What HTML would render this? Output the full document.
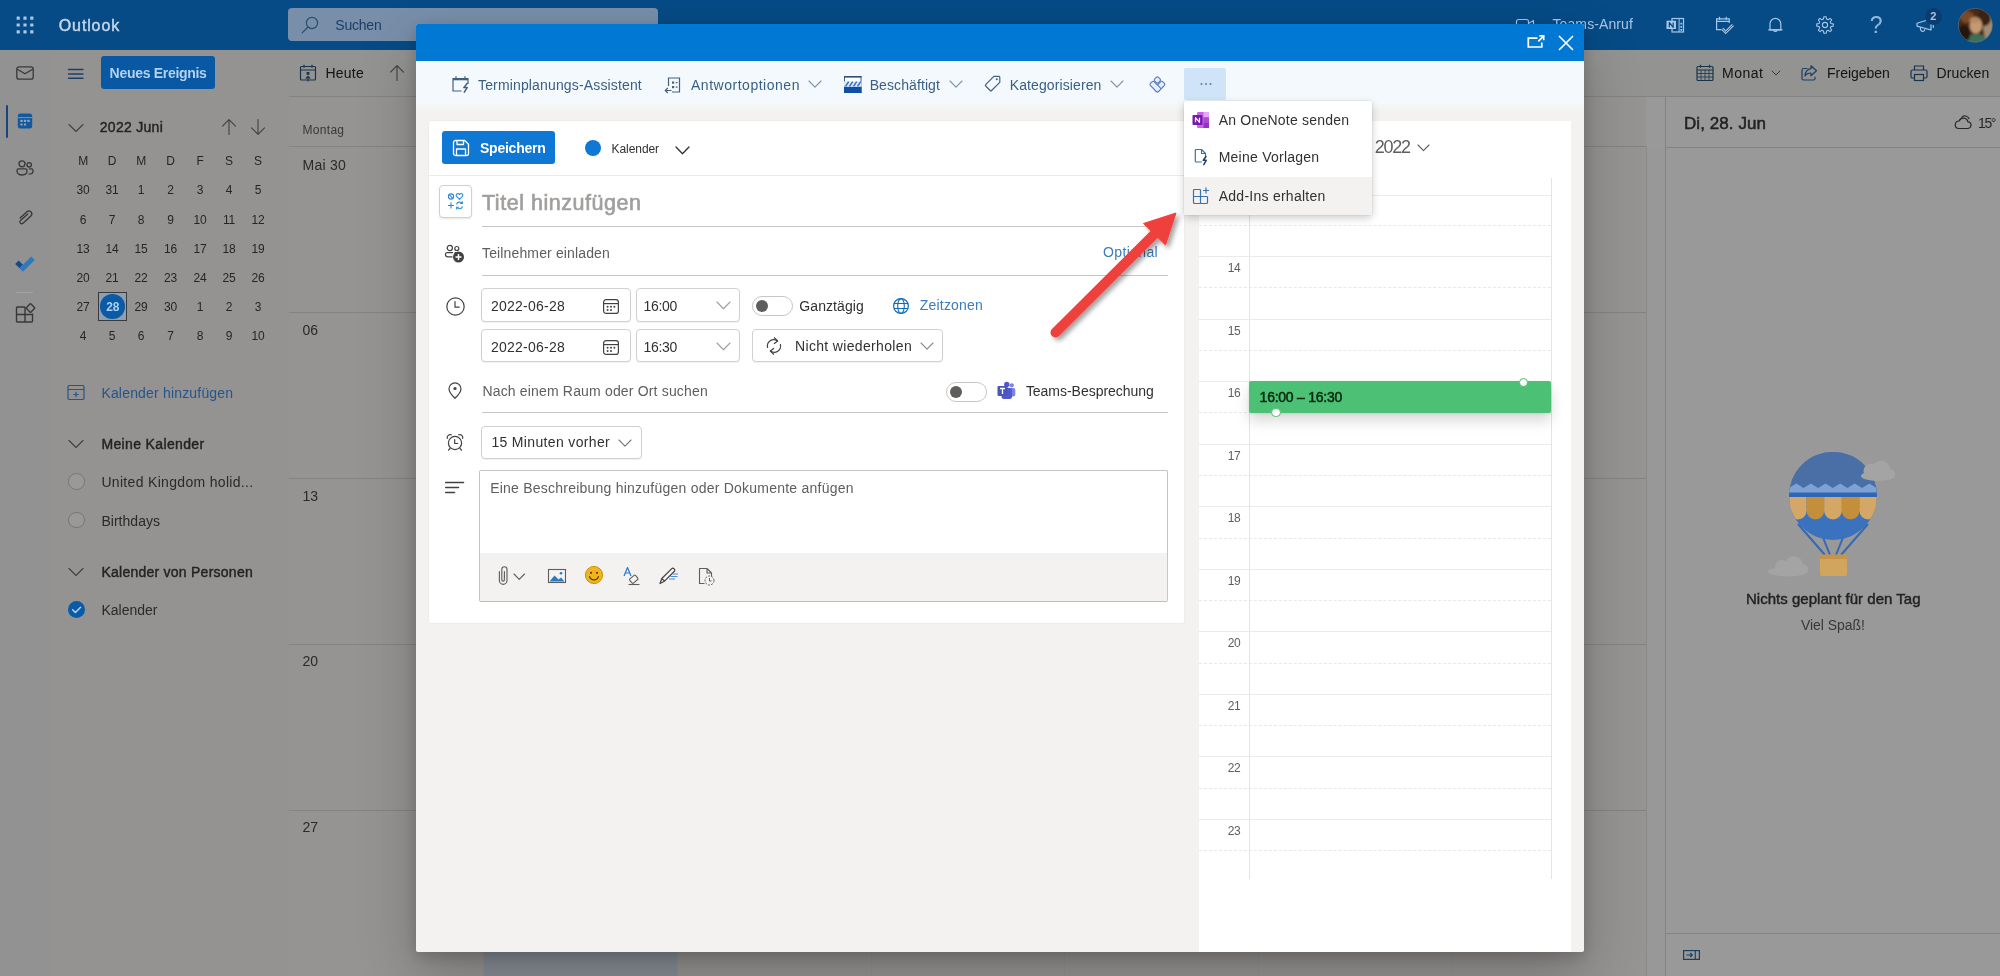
<!DOCTYPE html>
<html lang="de"><head><meta charset="utf-8"><title>Outlook Kalender</title>
<style>
html,body{margin:0;padding:0;}
body{width:2000px;height:976px;overflow:hidden;position:relative;background:#fff;font-family:"Liberation Sans",sans-serif;}
.t{position:absolute;white-space:nowrap;}
#app,#ov,#modal{position:absolute;left:0;top:0;width:2000px;height:976px;overflow:hidden;will-change:transform;}
#modal{overflow:visible;}
svg{overflow:visible;}
</style></head><body>
<div id="app">
<div style="position:absolute;left:0px;top:0px;width:2000px;height:50px;background:#0a7ddf;"></div>
<div style="position:absolute;left:0px;top:50px;width:50px;height:926px;background:#f5f4f4;"></div>
<div style="position:absolute;left:50px;top:50px;width:239px;height:926px;background:#f8f5f4;"></div>
<svg style="position:absolute;left:15px;top:63px;" width="20" height="20" viewBox="0 0 20 20" fill="none"><rect x="1.8" y="3.8" width="16.4" height="12.4" rx="2.2" stroke="#5c5c5c" stroke-width="1.3"/><path d="M2.3 6.3 L10 10.8 L17.7 6.3" stroke="#5c5c5c" stroke-width="1.3" stroke-linejoin="round"/></svg>
<svg style="position:absolute;left:15px;top:158px;" width="20" height="20" viewBox="0 0 20 20" fill="none"><circle cx="7" cy="5.8" r="3" stroke="#5c5c5c" stroke-width="1.3"/><circle cx="14.2" cy="6.8" r="2.2" stroke="#5c5c5c" stroke-width="1.3"/><path d="M2 12.5a1.6 1.6 0 0 1 1.6-1.6h6.8a1.6 1.6 0 0 1 1.6 1.6v0.6c0 2.4-2 3.9-5 3.9s-5-1.5-5-3.9z" stroke="#5c5c5c" stroke-width="1.3"/><path d="M13.5 16.2c2.6 0 4.5-1.2 4.5-3.2v-0.6a1.5 1.5 0 0 0-1.5-1.5h-2.6" stroke="#5c5c5c" stroke-width="1.3"/></svg>
<svg style="position:absolute;left:15px;top:207px;" width="20" height="20" viewBox="0 0 20 20" fill="none"><path d="M5.2 11.2 L11.7 4.7a2.9 2.9 0 0 1 4.1 4.1L8.3 16.3a1.8 1.8 0 0 1-2.6-2.6l6.9-6.9" stroke="#5c5c5c" stroke-width="1.3" stroke-linecap="round" stroke-linejoin="round" transform="rotate(3 10 10)"/></svg>
<svg style="position:absolute;left:15px;top:303px;" width="22" height="22" viewBox="0 0 22 22" fill="none"><path d="M10 4h-7.500a1 1 0 0 0-1 1v13a1 1 0 0 0 1 1h14a1 1 0 0 0 1-1v-7.500 M10 4v15 M1.500 11.500h16" stroke="#5c5c5c" stroke-width="1.400"/><rect x="12.300" y="1.800" width="6.400" height="6.400" rx=".8" transform="rotate(45 15.500 5)" stroke="#5c5c5c" stroke-width="1.400" fill="#f5f4f4"/></svg>
<svg style="position:absolute;left:66px;top:118px;" width="20" height="20" viewBox="0 0 20 20" fill="none"><path d="M3 6.5 L10 13.5 L17 6.5" stroke="#6e6c6a" stroke-width="1.1" stroke-linecap="round" stroke-linejoin="round"/></svg>
<span class="t" style="left:99.8px;top:119.3px;font-size:14px;line-height:17px;color:#3b3a39;-webkit-text-stroke:0.42px #3b3a39;letter-spacing:0.28px;">2022 Juni</span>
<svg style="position:absolute;left:219px;top:117px;" width="20" height="20" viewBox="0 0 20 20" fill="none"><path d="M10 17.5V2.8 M3.5 9.2 L10 2.7 L16.5 9.2" stroke="#6e6c6a" stroke-width="1.1" stroke-linecap="round" stroke-linejoin="round"/></svg>
<svg style="position:absolute;left:248px;top:117px;" width="20" height="20" viewBox="0 0 20 20" fill="none"><path d="M10 2.5V17.2 M3.5 10.8 L10 17.3 L16.5 10.8" stroke="#6e6c6a" stroke-width="1.1" stroke-linecap="round" stroke-linejoin="round"/></svg>
<span class="t" style="left:78.2px;top:154.1px;font-size:12px;line-height:14px;color:#3f3e3d;letter-spacing:-0.30px;">M</span>
<span class="t" style="left:107.8px;top:154.1px;font-size:12px;line-height:14px;color:#3f3e3d;letter-spacing:-0.26px;">D</span>
<span class="t" style="left:136.2px;top:154.1px;font-size:12px;line-height:14px;color:#3f3e3d;letter-spacing:-0.30px;">M</span>
<span class="t" style="left:166.3px;top:154.1px;font-size:12px;line-height:14px;color:#3f3e3d;letter-spacing:-0.26px;">D</span>
<span class="t" style="left:196.4px;top:154.1px;font-size:12px;line-height:14px;color:#3f3e3d;letter-spacing:-0.22px;">F</span>
<span class="t" style="left:225.1px;top:154.1px;font-size:12px;line-height:14px;color:#3f3e3d;letter-spacing:-0.24px;">S</span>
<span class="t" style="left:254.1px;top:154.1px;font-size:12px;line-height:14px;color:#3f3e3d;letter-spacing:-0.24px;">S</span>
<span class="t" style="left:76.5px;top:183.3px;font-size:12px;line-height:14px;color:#3f3e3d;letter-spacing:-0.20px;">30</span>
<span class="t" style="left:105.5px;top:183.3px;font-size:12px;line-height:14px;color:#3f3e3d;letter-spacing:-0.20px;">31</span>
<span class="t" style="left:137.8px;top:183.3px;font-size:12px;line-height:14px;color:#3f3e3d;letter-spacing:-0.20px;">1</span>
<span class="t" style="left:167.3px;top:183.3px;font-size:12px;line-height:14px;color:#3f3e3d;letter-spacing:-0.20px;">2</span>
<span class="t" style="left:196.8px;top:183.3px;font-size:12px;line-height:14px;color:#3f3e3d;letter-spacing:-0.20px;">3</span>
<span class="t" style="left:225.8px;top:183.3px;font-size:12px;line-height:14px;color:#3f3e3d;letter-spacing:-0.20px;">4</span>
<span class="t" style="left:254.8px;top:183.3px;font-size:12px;line-height:14px;color:#3f3e3d;letter-spacing:-0.20px;">5</span>
<span class="t" style="left:79.8px;top:212.5px;font-size:12px;line-height:14px;color:#3f3e3d;letter-spacing:-0.20px;">6</span>
<span class="t" style="left:108.8px;top:212.5px;font-size:12px;line-height:14px;color:#3f3e3d;letter-spacing:-0.20px;">7</span>
<span class="t" style="left:137.8px;top:212.5px;font-size:12px;line-height:14px;color:#3f3e3d;letter-spacing:-0.20px;">8</span>
<span class="t" style="left:167.3px;top:212.5px;font-size:12px;line-height:14px;color:#3f3e3d;letter-spacing:-0.20px;">9</span>
<span class="t" style="left:193.5px;top:212.5px;font-size:12px;line-height:14px;color:#3f3e3d;letter-spacing:-0.20px;">10</span>
<span class="t" style="left:223.0px;top:212.5px;font-size:12px;line-height:14px;color:#3f3e3d;letter-spacing:-0.19px;">11</span>
<span class="t" style="left:251.5px;top:212.5px;font-size:12px;line-height:14px;color:#3f3e3d;letter-spacing:-0.20px;">12</span>
<span class="t" style="left:76.5px;top:241.6px;font-size:12px;line-height:14px;color:#3f3e3d;letter-spacing:-0.20px;">13</span>
<span class="t" style="left:105.5px;top:241.6px;font-size:12px;line-height:14px;color:#3f3e3d;letter-spacing:-0.20px;">14</span>
<span class="t" style="left:134.5px;top:241.6px;font-size:12px;line-height:14px;color:#3f3e3d;letter-spacing:-0.20px;">15</span>
<span class="t" style="left:164.0px;top:241.6px;font-size:12px;line-height:14px;color:#3f3e3d;letter-spacing:-0.20px;">16</span>
<span class="t" style="left:193.5px;top:241.6px;font-size:12px;line-height:14px;color:#3f3e3d;letter-spacing:-0.20px;">17</span>
<span class="t" style="left:222.5px;top:241.6px;font-size:12px;line-height:14px;color:#3f3e3d;letter-spacing:-0.20px;">18</span>
<span class="t" style="left:251.5px;top:241.6px;font-size:12px;line-height:14px;color:#3f3e3d;letter-spacing:-0.20px;">19</span>
<span class="t" style="left:76.5px;top:270.8px;font-size:12px;line-height:14px;color:#3f3e3d;letter-spacing:-0.20px;">20</span>
<span class="t" style="left:105.5px;top:270.8px;font-size:12px;line-height:14px;color:#3f3e3d;letter-spacing:-0.20px;">21</span>
<span class="t" style="left:134.5px;top:270.8px;font-size:12px;line-height:14px;color:#3f3e3d;letter-spacing:-0.20px;">22</span>
<span class="t" style="left:164.0px;top:270.8px;font-size:12px;line-height:14px;color:#3f3e3d;letter-spacing:-0.20px;">23</span>
<span class="t" style="left:193.5px;top:270.8px;font-size:12px;line-height:14px;color:#3f3e3d;letter-spacing:-0.20px;">24</span>
<span class="t" style="left:222.5px;top:270.8px;font-size:12px;line-height:14px;color:#3f3e3d;letter-spacing:-0.20px;">25</span>
<span class="t" style="left:251.5px;top:270.8px;font-size:12px;line-height:14px;color:#3f3e3d;letter-spacing:-0.20px;">26</span>
<span class="t" style="left:76.5px;top:299.9px;font-size:12px;line-height:14px;color:#3f3e3d;letter-spacing:-0.20px;">27</span>
<span class="t" style="left:134.5px;top:299.9px;font-size:12px;line-height:14px;color:#3f3e3d;letter-spacing:-0.20px;">29</span>
<span class="t" style="left:164.0px;top:299.9px;font-size:12px;line-height:14px;color:#3f3e3d;letter-spacing:-0.20px;">30</span>
<span class="t" style="left:196.8px;top:299.9px;font-size:12px;line-height:14px;color:#3f3e3d;letter-spacing:-0.20px;">1</span>
<span class="t" style="left:225.8px;top:299.9px;font-size:12px;line-height:14px;color:#3f3e3d;letter-spacing:-0.20px;">2</span>
<span class="t" style="left:254.8px;top:299.9px;font-size:12px;line-height:14px;color:#3f3e3d;letter-spacing:-0.20px;">3</span>
<span class="t" style="left:79.8px;top:329.1px;font-size:12px;line-height:14px;color:#3f3e3d;letter-spacing:-0.20px;">4</span>
<span class="t" style="left:108.8px;top:329.1px;font-size:12px;line-height:14px;color:#3f3e3d;letter-spacing:-0.20px;">5</span>
<span class="t" style="left:137.8px;top:329.1px;font-size:12px;line-height:14px;color:#3f3e3d;letter-spacing:-0.20px;">6</span>
<span class="t" style="left:167.3px;top:329.1px;font-size:12px;line-height:14px;color:#3f3e3d;letter-spacing:-0.20px;">7</span>
<span class="t" style="left:196.8px;top:329.1px;font-size:12px;line-height:14px;color:#3f3e3d;letter-spacing:-0.20px;">8</span>
<span class="t" style="left:225.8px;top:329.1px;font-size:12px;line-height:14px;color:#3f3e3d;letter-spacing:-0.20px;">9</span>
<span class="t" style="left:251.5px;top:329.1px;font-size:12px;line-height:14px;color:#3f3e3d;letter-spacing:-0.20px;">10</span>
<svg style="position:absolute;left:66px;top:434px;" width="20" height="20" viewBox="0 0 20 20" fill="none"><path d="M3 6.5 L10 13.5 L17 6.5" stroke="#6e6c6a" stroke-width="1.1" stroke-linecap="round" stroke-linejoin="round"/></svg>
<span class="t" style="left:101.4px;top:435.5px;font-size:14px;line-height:17px;color:#3b3a39;-webkit-text-stroke:0.42px #3b3a39;letter-spacing:0.36px;">Meine Kalender</span>
<div style="position:absolute;left:68px;top:473px;width:14.5px;height:14.5px;border:1px solid #c8c6c4;border-radius:50%;background:#fff;"></div>
<span class="t" style="left:101.4px;top:474.2px;font-size:14px;line-height:17px;color:#484644;letter-spacing:0.32px;">United Kingdom holid...</span>
<div style="position:absolute;left:68px;top:511.5px;width:14.5px;height:14.5px;border:1px solid #c8c6c4;border-radius:50%;background:#fff;"></div>
<span class="t" style="left:101.4px;top:512.5px;font-size:14px;line-height:17px;color:#484644;letter-spacing:0.03px;">Birthdays</span>
<svg style="position:absolute;left:66px;top:562px;" width="20" height="20" viewBox="0 0 20 20" fill="none"><path d="M3 6.5 L10 13.5 L17 6.5" stroke="#6e6c6a" stroke-width="1.1" stroke-linecap="round" stroke-linejoin="round"/></svg>
<span class="t" style="left:101.4px;top:563.9px;font-size:14px;line-height:17px;color:#3b3a39;-webkit-text-stroke:0.42px #3b3a39;letter-spacing:0.25px;">Kalender von Personen</span>
<span class="t" style="left:101.4px;top:602.1px;font-size:14px;line-height:17px;color:#484644;letter-spacing:0.01px;">Kalender</span>
<div style="position:absolute;left:289px;top:50px;width:1711px;height:46px;background:#f6f5f4;"></div>
<div style="position:absolute;left:289px;top:96px;width:1711px;height:880px;background:#fff;"></div>
<div style="position:absolute;left:289px;top:97px;width:1357px;height:879px;background:#faf7f6;"></div>
<div style="position:absolute;left:289px;top:96px;width:1711px;height:1px;background:#dddbd9;"></div>
<svg style="position:absolute;left:298px;top:63px;" width="20" height="20" viewBox="0 0 20 20" fill="none"><rect x="2.5" y="3.5" width="15" height="13.5" rx="1" stroke="#2b5580" stroke-width="1.2"/><path d="M2.5 7h15 M6 1.8v3 M14 1.8v3" stroke="#2b5580" stroke-width="1.2"/><rect x="8.6" y="9" width="2.8" height="2.8" fill="#2b5580"/><path d="M10 18.5v-5 M7.8 15.6 L10 13.3 L12.2 15.6" stroke="#2b5580" stroke-width="1.1"/></svg>
<span class="t" style="left:325.5px;top:64.7px;font-size:14px;line-height:17px;color:#242424;letter-spacing:0.23px;">Heute</span>
<svg style="position:absolute;left:387px;top:63px;" width="20" height="20" viewBox="0 0 20 20" fill="none"><path d="M10 17.5V2.8 M3.5 9.2 L10 2.7 L16.5 9.2" stroke="#6e6c6a" stroke-width="1.1" stroke-linecap="round" stroke-linejoin="round"/></svg>
<svg style="position:absolute;left:1695px;top:63px;" width="20" height="20" viewBox="0 0 20 20" fill="none"><rect x="2" y="3.5" width="16" height="14" rx="1" stroke="#2b5580" stroke-width="1.2"/><path d="M2 7h16 M5.5 1.8v3 M14.5 1.8v3" stroke="#2b5580" stroke-width="1.2"/><path d="M2 10.5h16 M2 14h16 M6 7v10.5 M10 7v10.5 M14 7v10.5" stroke="#2b5580" stroke-width=".8"/></svg>
<span class="t" style="left:1722.0px;top:65.1px;font-size:14px;line-height:17px;color:#242424;letter-spacing:0.48px;">Monat</span>
<svg style="position:absolute;left:1770px;top:67px;" width="12" height="12" viewBox="0 0 12 12" fill="none"><path d="M2 4 L6 8 L10 4" stroke="#605e5c" stroke-width="1" stroke-linecap="round" stroke-linejoin="round"/></svg>
<svg style="position:absolute;left:1799px;top:63px;" width="20" height="20" viewBox="0 0 20 20" fill="none"><path d="M8 5.5H4.5a1.5 1.5 0 0 0-1.5 1.500V15.500a1.500 1.500 0 0 0 1.500 1.500h10a1.500 1.500 0 0 0 1.500-1.500V14" stroke="#2b6aa8" stroke-width="1.2" stroke-linecap="round"/><path d="M12 2.800 L17.500 7.800 L12 12.800 V10c-3 0-4.800 1-6 3 0.300-4 2.500-6.800 6-7.300z" stroke="#2b6aa8" stroke-width="1.200" stroke-linejoin="round"/></svg>
<span class="t" style="left:1827.0px;top:65.1px;font-size:14px;line-height:17px;color:#242424;letter-spacing:-0.03px;">Freigeben</span>
<svg style="position:absolute;left:1909px;top:63px;" width="20" height="20" viewBox="0 0 20 20" fill="none"><path d="M5.500 7V3h9v4" stroke="#2b5580" stroke-width="1.200"/><rect x="2" y="7" width="16" height="8" rx="1.500" stroke="#2b5580" stroke-width="1.200"/><rect x="5.500" y="11.500" width="9" height="6" fill="#f6f5f4" stroke="#2b5580" stroke-width="1.200"/></svg>
<span class="t" style="left:1936.5px;top:65.1px;font-size:14px;line-height:17px;color:#242424;letter-spacing:0.11px;">Drucken</span>
<div style="position:absolute;left:289px;top:146px;width:1357px;height:1px;background:#dddbd9;"></div>
<div style="position:absolute;left:289px;top:312px;width:1357px;height:1px;background:#dddbd9;"></div>
<div style="position:absolute;left:289px;top:478px;width:1357px;height:1px;background:#dddbd9;"></div>
<div style="position:absolute;left:289px;top:644px;width:1357px;height:1px;background:#dddbd9;"></div>
<div style="position:absolute;left:289px;top:810px;width:1357px;height:1px;background:#dddbd9;"></div>
<div style="position:absolute;left:1646px;top:146px;width:1px;height:830px;background:#e8e6e4;"></div>
<div style="position:absolute;left:483px;top:146px;width:1px;height:830px;background:#f4f1f0;"></div>
<div style="position:absolute;left:677px;top:146px;width:1px;height:830px;background:#f4f1f0;"></div>
<div style="position:absolute;left:871px;top:146px;width:1px;height:830px;background:#f4f1f0;"></div>
<div style="position:absolute;left:1064px;top:146px;width:1px;height:830px;background:#f4f1f0;"></div>
<div style="position:absolute;left:1258px;top:146px;width:1px;height:830px;background:#f4f1f0;"></div>
<div style="position:absolute;left:1452px;top:146px;width:1px;height:830px;background:#f4f1f0;"></div>
<div style="position:absolute;left:484px;top:811px;width:193px;height:165px;background:#e3ecfb;"></div>
<span class="t" style="left:302.5px;top:123.1px;font-size:12px;line-height:14px;color:#605e5c;letter-spacing:0.30px;">Montag</span>
<span class="t" style="left:302.6px;top:157.1px;font-size:14px;line-height:17px;color:#484644;letter-spacing:0.23px;">Mai 30</span>
<span class="t" style="left:302.6px;top:321.7px;font-size:14px;line-height:17px;color:#484644;letter-spacing:-0.19px;">06</span>
<span class="t" style="left:302.6px;top:488.0px;font-size:14px;line-height:17px;color:#484644;letter-spacing:-0.19px;">13</span>
<span class="t" style="left:302.6px;top:652.7px;font-size:14px;line-height:17px;color:#484644;letter-spacing:-0.19px;">20</span>
<span class="t" style="left:302.6px;top:818.7px;font-size:14px;line-height:17px;color:#484644;letter-spacing:-0.19px;">27</span>
<div style="position:absolute;left:1647px;top:147px;width:18px;height:829px;background:#fdfdfd;"></div>
<div style="position:absolute;left:1665px;top:97px;width:1px;height:879px;background:#dddbd9;"></div>
<div style="position:absolute;left:1666px;top:147px;width:334px;height:1px;background:#dddbd9;"></div>
<span class="t" style="left:1684.0px;top:114.0px;font-size:17px;line-height:20px;color:#3b3a39;-webkit-text-stroke:0.51px #3b3a39;letter-spacing:0.07px;">Di, 28. Jun</span>
<svg style="position:absolute;left:1953px;top:113px;" width="20" height="20" viewBox="0 0 20 20" fill="none"><path d="M5.200 15.500h9.300a3.300 3.300 0 0 0 .4-6.600 4.600 4.600 0 0 0-8.800-.9A3.800 3.800 0 0 0 5.200 15.500z" stroke="#424242" stroke-width="1.200" stroke-linejoin="round"/><path d="M8.5 4.600a4.500 4.500 0 0 1 7.800 1.500" stroke="#424242" stroke-width="1.100"/></svg>
<span class="t" style="left:1978.0px;top:115.2px;font-size:14px;line-height:17px;color:#424242;letter-spacing:-1.39px;">15°</span>
<span class="t" style="left:1746.0px;top:589.5px;font-size:15px;line-height:18px;color:#3b3a39;-webkit-text-stroke:0.45px #3b3a39;letter-spacing:0.02px;">Nichts geplant für den Tag</span>
<span class="t" style="left:1801.0px;top:617.0px;font-size:14px;line-height:17px;color:#605e5c;letter-spacing:-0.06px;">Viel Spaß!</span>
<div style="position:absolute;left:1666px;top:933px;width:334px;height:1px;background:#dddbd9;"></div>
<svg style="position:absolute;left:1683.2px;top:949.5px;" width="17" height="10" viewBox="0 0 17 10" fill="none"><rect x=".6" y=".6" width="15.800" height="8.800" stroke="#2b6aa8" stroke-width="1.200"/><path d="M12.300 .6v8.800 M3.300 5h6 M7.300 3 L9.300 5 L7.300 7" stroke="#2b6aa8" stroke-width="1.100"/></svg>
</div>
<div id="ov" style="background:rgba(0,0,0,.4);"></div>
<div id="top2" style="position:absolute;left:0;top:0;width:2000px;height:50px;will-change:transform;">
<div style="position:absolute;left:288px;top:8px;width:370px;height:33px;background:#788ea9;border-radius:4px;"></div>
<svg style="position:absolute;left:300px;top:15px;" width="20" height="20" viewBox="0 0 20 20" fill="none"><circle cx="12" cy="8" r="5.600" stroke="#2a4c72" stroke-width="1.200"/><path d="M8 12 L2.200 17.800" stroke="#2a4c72" stroke-width="1.200" stroke-linecap="round"/></svg>
<span class="t" style="left:335.3px;top:17.0px;font-size:14px;line-height:17px;color:#1d3f66;letter-spacing:-0.21px;">Suchen</span>
<svg style="position:absolute;left:0px;top:0px;" width="50" height="50" viewBox="0 0 50 50" fill="none"><rect x="16.6" y="16.6" width="3.2" height="3.2" rx="0.4" fill="#a9c6e6"/><rect x="16.6" y="23.4" width="3.2" height="3.2" rx="0.4" fill="#a9c6e6"/><rect x="16.6" y="30.2" width="3.2" height="3.2" rx="0.4" fill="#a9c6e6"/><rect x="23.4" y="16.6" width="3.2" height="3.2" rx="0.4" fill="#a9c6e6"/><rect x="23.4" y="23.4" width="3.2" height="3.2" rx="0.4" fill="#a9c6e6"/><rect x="23.4" y="30.2" width="3.2" height="3.2" rx="0.4" fill="#a9c6e6"/><rect x="30.2" y="16.6" width="3.2" height="3.2" rx="0.4" fill="#a9c6e6"/><rect x="30.2" y="23.4" width="3.2" height="3.2" rx="0.4" fill="#a9c6e6"/><rect x="30.2" y="30.2" width="3.2" height="3.2" rx="0.4" fill="#a9c6e6"/></svg>
<span class="t" style="left:58.8px;top:16.0px;font-size:16px;line-height:19px;color:#c4d6ea;-webkit-text-stroke:0.48px #c4d6ea;letter-spacing:0.87px;">Outlook</span>
<svg style="position:absolute;left:1515px;top:15px;" width="20" height="20" viewBox="0 0 20 20" fill="none"><rect x="1.5" y="4.5" width="12" height="11" rx="2" stroke="#a9c6e6" stroke-width="1.2"/><path d="M13.5 8.5 L18.5 5.5 V14.5 L13.5 11.5" stroke="#a9c6e6" stroke-width="1.2" stroke-linejoin="round"/></svg>
<span class="t" style="left:1552.5px;top:16.3px;font-size:14px;line-height:17px;color:#a9c6e6;letter-spacing:0.10px;">Teams-Anruf</span>
<svg style="position:absolute;left:1665px;top:15px;" width="20" height="20" viewBox="0 0 20 20" fill="none"><rect x="7" y="3.500" width="11.500" height="13.500" stroke="#a9c6e6" stroke-width="1.200"/><path d="M14.100 3.500v13.500" stroke="#a9c6e6" stroke-width="1"/><g fill="#a9c6e6"><rect x="15.400" y="7.700" width="1.800" height="1.800"/><rect x="15.400" y="10.900" width="1.800" height="1.800"/><rect x="15.400" y="14" width="1.800" height="1.800"/></g><rect x="1.500" y="5.700" width="9.500" height="8.300" fill="#a9c6e6"/><path d="M4.300 12.300V7.500 L8.200 12.300 V7.500" stroke="#064b86" stroke-width="1.200" stroke-linejoin="round"/></svg>
<svg style="position:absolute;left:1715px;top:15px;" width="20" height="20" viewBox="0 0 20 20" fill="none"><path d="M14.200 8V3.800H1.600V14.600H6.500" stroke="#a9c6e6" stroke-width="1.200"/><path d="M1.600 6.300h12.600 M4.500 1.800v3 M11.300 1.800v3" stroke="#a9c6e6" stroke-width="1.200"/><path d="M7.300 13.800 L10.700 17.300 L18 10" stroke="#a9c6e6" stroke-width="2.800" stroke-linejoin="miter"/><path d="M7.300 13.800 L10.700 17.300 L18 10" stroke="#064b86" stroke-width="0.900" stroke-linejoin="miter"/></svg>
<svg style="position:absolute;left:1765px;top:15px;" width="20" height="20" viewBox="0 0 20 20" fill="none"><path d="M5 14.800V8.800a5.400 5.400 0 0 1 10.800 0v6z" stroke="#a9c6e6" stroke-width="1.200" stroke-linejoin="round"/><path d="M3.700 14.800h13.400" stroke="#a9c6e6" stroke-width="1.200" stroke-linecap="round"/><path d="M8.600 15.200a1.900 1.900 0 0 0 3.600 0" stroke="#a9c6e6" stroke-width="1.200"/></svg>
<svg style="position:absolute;left:1815px;top:15px;" width="20" height="20" viewBox="0 0 20 20" fill="none"><path d="M18.27 8.84 L18.27 11.16 L15.89 11.58 L15.28 13.05 L16.67 15.03 L15.03 16.67 L13.05 15.28 L11.58 15.89 L11.16 18.27 L8.84 18.27 L8.42 15.89 L6.95 15.28 L4.97 16.67 L3.33 15.03 L4.72 13.05 L4.11 11.58 L1.73 11.16 L1.73 8.84 L4.11 8.42 L4.72 6.95 L3.33 4.97 L4.97 3.33 L6.95 4.72 L8.42 4.11 L8.84 1.73 L11.16 1.73 L11.58 4.11 L13.05 4.72 L15.03 3.33 L16.67 4.97 L15.28 6.95 L15.89 8.42z" stroke="#a9c6e6" stroke-width="1.100" stroke-linejoin="round"/><circle cx="10" cy="10" r="2.600" stroke="#a9c6e6" stroke-width="1.100"/></svg>
<span class="t" style="left:1869.8px;top:11.3px;font-size:23px;line-height:28px;color:#96b8dd;letter-spacing:-2.39px;">?</span>
<svg style="position:absolute;left:1914px;top:15px;" width="22" height="20" viewBox="0 0 22 20" fill="none"><path d="M3 8.2 L17 4 V15 L3 11.2z" stroke="#a9c6e6" stroke-width="1.2" stroke-linejoin="round"/><path d="M6.5 12.2v1.6a2.2 2.2 0 0 0 4.4 0.6" stroke="#a9c6e6" stroke-width="1.2"/><path d="M19.3 6.5v6" stroke="#a9c6e6" stroke-width="1.2" stroke-linecap="round"/></svg>
<div style="position:absolute;left:1925px;top:8px;width:17px;height:17px;border-radius:50%;background:#0a3d6e;"></div>
<span class="t" style="left:1930.3px;top:10.4px;font-size:11px;line-height:13px;color:#a9c6e6;font-weight:700;letter-spacing:-0.12px;">2</span>
<div style="position:absolute;left:6px;top:105px;width:2px;height:33px;background:#14467d;border-radius:1px;"></div>
<svg style="position:absolute;left:15px;top:110.5px;" width="20" height="20" viewBox="0 0 20 20" fill="none"><rect x="2.800" y="2.500" width="14.400" height="15" rx="2.500" fill="#1259a2"/><path d="M2.800 6.600h14.400" stroke="#8e9aa8" stroke-width="0.900"/><g fill="#98a3b0"><rect x="5.400" y="8.800" width="2.200" height="2.200" rx=".5"/><rect x="8.900" y="8.800" width="2.200" height="2.200" rx=".5"/><rect x="12.400" y="8.800" width="2.200" height="2.200" rx=".5"/><rect x="5.400" y="12.400" width="2.200" height="2.200" rx=".5"/><rect x="8.900" y="12.400" width="2.200" height="2.200" rx=".5"/></g></svg>
<svg style="position:absolute;left:15px;top:256px;" width="20" height="16" viewBox="0 0 20 16" fill="none"><path d="M0.200 8 L3.700 4.500 L8 8.800 L4.500 12.300z" fill="#154a8c"/><path d="M4.500 12.300 L16.300 0.500 L19.800 4 L8 15.800z" fill="#2b7ac4"/></svg>
<div style="position:absolute;left:16px;top:292px;width:17px;height:1px;background:#a5a3a2;"></div>
<svg style="position:absolute;left:66px;top:63.5px;" width="20" height="20" viewBox="0 0 20 20" fill="none"><path d="M2.500 5.500h14.500 M2.500 10h14.500 M2.500 14.300h14.500" stroke="#1b4069" stroke-width="1.400" stroke-linecap="round"/></svg>
<div style="position:absolute;left:101px;top:56px;width:113.5px;height:33px;background:#0858a3;border-radius:3px;"></div>
<span class="t" style="left:109.6px;top:65.0px;font-size:14px;line-height:17px;color:#b4d2f0;font-weight:700;letter-spacing:-0.30px;">Neues Ereignis</span>
<div style="position:absolute;left:98px;top:291.5px;width:27px;height:27.5px;border:1px solid #3a3a3a;background:#8d9fb3;"></div>
<div style="position:absolute;left:100.3px;top:294px;width:24.5px;height:24.5px;border-radius:50%;background:#0a5aa5;"></div>
<span class="t" style="left:106.2px;top:299.7px;font-size:12px;line-height:14px;color:#a9d0f3;font-weight:700;letter-spacing:-0.20px;">28</span>
<svg style="position:absolute;left:67.5px;top:601px;" width="17" height="17" viewBox="0 0 17 17" fill="none"><circle cx="8.500" cy="8.500" r="8.500" fill="#0a5aa5"/><path d="M4.600 8.800 L7.400 11.500 L12.600 6.200" stroke="#b4d2f0" stroke-width="1.500" stroke-linecap="round" stroke-linejoin="round"/></svg>
<svg style="position:absolute;left:66px;top:382px;" width="20" height="20" viewBox="0 0 20 20" fill="none"><rect x="2" y="3.500" width="16" height="14" rx="1.200" stroke="#24558c" stroke-width="1.200"/><path d="M2 7.500h16 M10 9.800v5.400 M7.300 12.500h5.400" stroke="#24558c" stroke-width="1.200"/></svg>
<span class="t" style="left:101.4px;top:384.7px;font-size:14px;line-height:17px;color:#24558c;letter-spacing:0.18px;">Kalender hinzufügen</span>
<svg style="position:absolute;left:1789px;top:452px;" width="88" height="125" viewBox="0 0 88 125" fill="none"><defs><clipPath id="bc"><circle cx="44" cy="44" r="44"/></clipPath></defs>
<g fill="#a5a4a4"><ellipse cx="-1" cy="119.500" rx="20" ry="5"/><circle cx="-7" cy="115" r="7"/><circle cx="5" cy="113" r="9"/><circle cx="14" cy="117" r="5"/></g>
<g stroke="#3568b5" stroke-width="2"><path d="M9 72 L36 103 M31 78 L41 103 M57 78 L47 103 M79 72 L52 103"/></g>
<g clip-path="url(#bc)"><rect x="0" y="0" width="88" height="88" fill="#3b72bd"/><rect x="0" y="0" width="88" height="38" fill="#4a6ea6"/>
<path d="M0 36 l7.300 -4.500 l7.300 4.500 l7.300 -4.500 l7.300 4.500 l7.300 -4.500 l7.300 4.500 l7.300 -4.500 l7.300 4.500 l7.300 -4.500 l7.300 4.500 l7.300 -4.500 l7.300 4.500 V42 H0z" fill="#7da3d4"/>
<rect x="0" y="40.500" width="88" height="4.500" fill="#2f66b5"/>
<g><rect x="0" y="45" width="17.600" height="14" fill="#d4a766"/><rect x="17.600" y="45" width="17.600" height="14" fill="#c48f3a"/><rect x="35.200" y="45" width="17.600" height="14" fill="#d4a766"/><rect x="52.800" y="45" width="17.600" height="14" fill="#c48f3a"/><rect x="70.400" y="45" width="17.600" height="14" fill="#d4a766"/>
<ellipse cx="8.800" cy="59" rx="8.800" ry="8.500" fill="#d4a766"/><ellipse cx="26.400" cy="59" rx="8.800" ry="8.500" fill="#c48f3a"/><ellipse cx="44" cy="59" rx="8.800" ry="8.500" fill="#d4a766"/><ellipse cx="61.600" cy="59" rx="8.800" ry="8.500" fill="#c48f3a"/><ellipse cx="79.200" cy="59" rx="8.800" ry="8.500" fill="#d4a766"/></g></g>
<g fill="#a5a4a4"><ellipse cx="89" cy="24" rx="17" ry="5"/><circle cx="82" cy="19" r="7.500"/><circle cx="92" cy="17.500" r="9"/><circle cx="101" cy="22" r="5"/></g>
<rect x="31" y="103" width="27" height="21" rx="2" fill="#d2a55f"/><rect x="30" y="102.500" width="29" height="4.500" rx="1.500" fill="#c4944a"/></svg>
<svg style="position:absolute;left:1958px;top:8px;" width="34.5" height="34.5" viewBox="0 0 34.5 34.5" fill="none"><defs><clipPath id="avc"><circle cx="17.250" cy="17.250" r="17.250"/></clipPath><filter id="avb" x="-20%" y="-20%" width="140%" height="140%"><feGaussianBlur stdDeviation="1.100"/></filter></defs><g clip-path="url(#avc)"><rect width="35" height="35" fill="#3b2415"/><g filter="url(#avb)"><ellipse cx="31" cy="20" rx="6" ry="13" fill="#a08c70"/><ellipse cx="13" cy="14" rx="13" ry="14" fill="#4a2a17"/><ellipse cx="26" cy="10" rx="7" ry="8" fill="#3a2214"/><ellipse cx="9" cy="9" rx="7" ry="6" fill="#7a4a28"/><ellipse cx="18" cy="17.500" rx="6.300" ry="8.300" fill="#c39a72"/><ellipse cx="16.500" cy="12" rx="5" ry="3" fill="#b58a60"/><ellipse cx="19" cy="33" rx="10" ry="7.500" fill="#3e6e58"/><ellipse cx="6" cy="26" rx="6" ry="9" fill="#24140c"/></g></g><circle cx="17.250" cy="17.250" r="16.900" stroke="#4d78a8" stroke-width=".7"/></svg>
</div>
<div id="modal">
<div style="position:absolute;left:416px;top:24px;width:1168px;height:928px;background:#f3f2f1;border-radius:2px;box-shadow:0 25.6px 57.6px 0 rgba(0,0,0,.22),0 4.8px 14.4px 0 rgba(0,0,0,.18);"></div>
<div style="position:absolute;left:416px;top:24px;width:1168px;height:37px;background:#0078d4;border-radius:2px 2px 0 0;"></div>
<svg style="position:absolute;left:1526px;top:33px;" width="20" height="17" viewBox="0 0 20 17" fill="none"><path d="M11.500 5.200H2.300V14H15.800V9.500" stroke="#fff" stroke-width="1.700"/><path d="M12.300 8.300 L17.300 3.300 M13.300 2.900h4.400v4.400" stroke="#fff" stroke-width="1.700"/></svg>
<svg style="position:absolute;left:1558px;top:35px;" width="16" height="16" viewBox="0 0 16 16" fill="none"><path d="M1.500 1.500 L14.500 14.500 M14.500 1.500 L1.500 14.500" stroke="#fff" stroke-width="1.700" stroke-linecap="round"/></svg>
<div style="position:absolute;left:416px;top:61px;width:1168px;height:50px;background:linear-gradient(#f3f9fd 0,#f3f9fd 84%,#f3f2f1 100%);"></div>
<svg style="position:absolute;left:452px;top:75px;" width="18" height="18" viewBox="0 0 18 18" fill="none"><path d="M16 9V3.500H1V16h8.500" stroke="#44617f" stroke-width="1.200"/><path d="M1 4.300h15" stroke="#44617f" stroke-width="2"/><path d="M4 1.300v2.500 M13 1.300v2.500" stroke="#44617f" stroke-width="1.200"/><path d="M15.300 8.300 L11.800 12.600h3.400 L12.300 17.200" stroke="#44617f" stroke-width="1.500" stroke-linejoin="round" stroke-linecap="round"/></svg>
<span class="t" style="left:478.0px;top:76.7px;font-size:14px;line-height:17px;color:#3a5f85;letter-spacing:0.15px;">Terminplanungs-Assistent</span>
<svg style="position:absolute;left:663px;top:75px;" width="20" height="20" viewBox="0 0 20 20" fill="none"><path d="M5.500 11V3h11v14H9" stroke="#44617f" stroke-width="1.200"/><rect x="9" y="6.500" width="2.200" height="2.200" fill="#44617f"/><rect x="9" y="11" width="2.200" height="2.200" fill="#44617f"/><path d="M12.800 7.600h1.700 M12.800 12.100h1.700" stroke="#44617f" stroke-width="1.200"/><path d="M8.500 15.500H2.500 M4.800 13 L2.300 15.500 L4.800 18" stroke="#44617f" stroke-width="1.200"/></svg>
<span class="t" style="left:691.0px;top:76.7px;font-size:14px;line-height:17px;color:#3a5f85;letter-spacing:0.52px;">Antwortoptionen</span>
<svg style="position:absolute;left:808px;top:80.08px" width="14" height="8.24" viewBox="-1 -1 14 8.24" fill="none"><path d="M0 0 L6.0 6.24 L12 0" stroke="#7d91a6" stroke-width="1.1" stroke-linecap="round" stroke-linejoin="round"/></svg>
<svg style="position:absolute;left:844px;top:76px;" width="18" height="17" viewBox="0 0 18 17" fill="none"><rect x=".5" y=".5" width="16.5" height="16" fill="#fff" stroke="#3a5f85" stroke-width="1"/><rect x="0" y="0" width="17.5" height="1.6" fill="#2f4f73"/><rect x="0" y="10.6" width="17.5" height="6.4" fill="#0f4fa8"/><rect x="0" y="5.4" width="17.5" height="5.2" fill="#dbe9f8"/><path d="M1.5 10.4 L4.7 5.6 M5.500 10.400 L8.700 5.600 M9.500 10.400 L12.700 5.600 M13.500 10.400 L16.700 5.600" stroke="#2f6fc4" stroke-width="1.500"/></svg>
<span class="t" style="left:869.7px;top:76.7px;font-size:14px;line-height:17px;color:#3a5f85;letter-spacing:0.09px;">Beschäftigt</span>
<svg style="position:absolute;left:948.5px;top:80.08px" width="14" height="8.24" viewBox="-1 -1 14 8.24" fill="none"><path d="M0 0 L6.0 6.24 L12 0" stroke="#7d91a6" stroke-width="1.1" stroke-linecap="round" stroke-linejoin="round"/></svg>
<svg style="position:absolute;left:984px;top:74px;" width="18" height="18" viewBox="0 0 18 18" fill="none"><path d="M9.800 2.300h5a1 1 0 0 1 1 1v5L7.600 16.500a1 1 0 0 1-1.400 0L1.700 12a1 1 0 0 1 0-1.400z" stroke="#44617f" stroke-width="1.200" stroke-linejoin="round"/><circle cx="12.800" cy="5.300" r="1" fill="#44617f"/></svg>
<span class="t" style="left:1009.7px;top:76.7px;font-size:14px;line-height:17px;color:#3a5f85;letter-spacing:0.11px;">Kategorisieren</span>
<svg style="position:absolute;left:1109.5px;top:80.08px" width="14" height="8.24" viewBox="-1 -1 14 8.24" fill="none"><path d="M0 0 L6.0 6.24 L12 0" stroke="#7d91a6" stroke-width="1.1" stroke-linecap="round" stroke-linejoin="round"/></svg>
<svg style="position:absolute;left:1149px;top:76px;" width="17" height="17" viewBox="0 0 17 17" fill="none"><g transform="translate(8.400 8.400) rotate(45)"><g stroke="#5b78c4" stroke-width="1.150" fill="#e3effb"><rect x="-5.700" y="-5.700" width="5.200" height="5.200" rx="1.500"/><rect x="0.400" y="-5.700" width="5.300" height="11.400" rx="1.700"/><rect x="-5.700" y="0.400" width="11.400" height="5.300" rx="1.700"/></g><rect x="1" y="1" width="4.100" height="4.100" fill="#e3effb"/></g></svg>
<div style="position:absolute;left:1184px;top:68px;width:42px;height:32px;background:#cfe4f8;border-radius:2px;"></div>
<svg style="position:absolute;left:1198px;top:80px;" width="16" height="8" viewBox="0 0 16 8" fill="none"><circle cx="3.500" cy="4" r="1" fill="#5b7ea6"/><circle cx="8" cy="4" r="1" fill="#5b7ea6"/><circle cx="12.500" cy="4" r="1" fill="#5b7ea6"/></svg>
<div style="position:absolute;left:429px;top:121px;width:755px;height:502px;background:#fff;border-radius:2px;box-shadow:0 0 2px rgba(0,0,0,.08);"></div>
<div style="position:absolute;left:442px;top:131px;width:113px;height:33px;background:#0f78d4;border-radius:3px;"></div>
<svg style="position:absolute;left:451px;top:138px;" width="20" height="20" viewBox="0 0 20 20" fill="none"><path d="M4.500 2.500h9.200l3.800 3.800v9.200a2 2 0 0 1-2 2h-11a2 2 0 0 1-2-2v-11a2 2 0 0 1 2-2z" stroke="#fff" stroke-width="1.300" stroke-linejoin="round"/><path d="M6 2.500v4h6.500v-4 M5.500 17.500v-6.500h9v6.500" stroke="#fff" stroke-width="1.300" stroke-linejoin="round"/></svg>
<span class="t" style="left:480.0px;top:139.7px;font-size:14px;line-height:17px;color:#fff;font-weight:700;letter-spacing:-0.24px;">Speichern</span>
<div style="position:absolute;left:584.5px;top:140px;width:16px;height:16px;background:#0f78d4;border-radius:50%;"></div>
<span class="t" style="left:611.6px;top:141.6px;font-size:12px;line-height:14px;color:#323130;letter-spacing:-0.08px;">Kalender</span>
<svg style="position:absolute;left:675px;top:145.62px" width="15" height="8.76" viewBox="-1 -1 15 8.76" fill="none"><path d="M0 0 L6.5 6.76 L13 0" stroke="#323130" stroke-width="1.3" stroke-linecap="round" stroke-linejoin="round"/></svg>
<div style="position:absolute;left:429px;top:175px;width:755px;height:1px;background:#edebe9;"></div>
<div style="position:absolute;left:439px;top:185px;width:31px;height:31px;border:1px solid #d2d0ce;border-radius:4px;background:#fff;box-shadow:0 1px 2px rgba(0,0,0,.1);"></div>
<svg style="position:absolute;left:445px;top:191px;" width="21" height="21" viewBox="0 0 21 21" fill="none"><circle cx="6" cy="5.500" r="2.600" stroke="#2b88d8" stroke-width="1.100"/><path d="M4.200 3.700 L7.800 7.300" stroke="#2b88d8" stroke-width="1.100"/><path d="M14.500 8.300 L11.600 5.400a1.700 1.700 0 0 1 2.400-2.400l.5.500.5-.5a1.700 1.700 0 0 1 2.400 2.400z" stroke="#2b88d8" stroke-width="1.100" stroke-linejoin="round"/><path d="M3 14.500h6 M6 11.500v6" stroke="#2b88d8" stroke-width="1.100"/><path d="M11.500 13.300a3.200 3.200 0 0 1 5.600-1 M17.500 15.500a3.200 3.200 0 0 1-5.600 1" stroke="#2b88d8" stroke-width="1.100"/><path d="M17.300 10.300v2.200h-2.200 M11.700 18.500v-2.200h2.200" stroke="#2b88d8" stroke-width="1.100"/></svg>
<span class="t" style="left:482.0px;top:189.6px;font-size:21.5px;line-height:26px;color:#a19f9d;-webkit-text-stroke:0.65px #a19f9d;letter-spacing:0.53px;">Titel hinzufügen</span>
<div style="position:absolute;left:482px;top:226px;width:686px;height:1px;background:#c8c6c4;"></div>
<svg style="position:absolute;left:444px;top:243px;" width="22" height="22" viewBox="0 0 22 22" fill="none"><circle cx="5.800" cy="5" r="2.600" stroke="#424242" stroke-width="1.200"/><circle cx="12.800" cy="5.500" r="2" stroke="#424242" stroke-width="1.200"/><path d="M8.500 13.800H3.800c-1.500 0-2.300-.8-2.300-2v-.6a1.500 1.500 0 0 1 1.500-1.500h6" stroke="#424242" stroke-width="1.200"/><path d="M10.500 9.700h3" stroke="#424242" stroke-width="1.200"/><circle cx="14.500" cy="14" r="5.500" fill="#424242"/><path d="M14.500 11v6 M11.500 14h6" stroke="#fff" stroke-width="1.400"/></svg>
<span class="t" style="left:482.0px;top:245.0px;font-size:14px;line-height:17px;color:#605e5c;letter-spacing:0.14px;">Teilnehmer einladen</span>
<span class="t" style="left:1103.0px;top:243.9px;font-size:14px;line-height:17px;color:#3b7cbb;letter-spacing:0.36px;">Optional</span>
<div style="position:absolute;left:482px;top:275px;width:686px;height:1px;background:#c8c6c4;"></div>
<svg style="position:absolute;left:445px;top:296px;" width="21" height="21" viewBox="0 0 21 21" fill="none"><circle cx="10.500" cy="10.500" r="8.700" stroke="#424242" stroke-width="1.200"/><path d="M10 5.500v5.700h4.200" stroke="#424242" stroke-width="1.200" stroke-linecap="round" stroke-linejoin="round"/></svg>
<div style="position:absolute;left:481px;top:288px;width:148px;height:32px;border:1px solid #d2d0ce;border-radius:4px;background:#fff;box-shadow:0 1px 1px rgba(0,0,0,.06);"></div>
<div style="position:absolute;left:635.5px;top:288px;width:102px;height:32px;border:1px solid #d2d0ce;border-radius:4px;background:#fff;box-shadow:0 1px 1px rgba(0,0,0,.06);"></div>
<span class="t" style="left:491.0px;top:297.9px;font-size:14px;line-height:17px;color:#323130;letter-spacing:0.24px;">2022-06-28</span>
<svg style="position:absolute;left:601.5px;top:296.5px;" width="18" height="18" viewBox="0 0 18 18" fill="none"><rect x="1.600" y="2.600" width="14.800" height="13.800" rx="2.500" stroke="#424242" stroke-width="1.200"/><path d="M1.600 6.600h14.800" stroke="#424242" stroke-width="1.200"/><g fill="#424242"><circle cx="5.600" cy="9.800" r="1"/><circle cx="9" cy="9.800" r="1"/><circle cx="12.400" cy="9.800" r="1"/><circle cx="5.600" cy="13.100" r="1"/><circle cx="9" cy="13.100" r="1"/></g></svg>
<span class="t" style="left:643.4px;top:297.9px;font-size:14px;line-height:17px;color:#323130;letter-spacing:-0.29px;">16:00</span>
<svg style="position:absolute;left:716px;top:301.12px" width="15" height="8.76" viewBox="-1 -1 15 8.76" fill="none"><path d="M0 0 L6.5 6.76 L13 0" stroke="#a19f9d" stroke-width="1.1" stroke-linecap="round" stroke-linejoin="round"/></svg>
<div style="position:absolute;left:481px;top:329px;width:148px;height:31px;border:1px solid #d2d0ce;border-radius:4px;background:#fff;box-shadow:0 1px 1px rgba(0,0,0,.06);"></div>
<div style="position:absolute;left:635.5px;top:329px;width:102px;height:31px;border:1px solid #d2d0ce;border-radius:4px;background:#fff;box-shadow:0 1px 1px rgba(0,0,0,.06);"></div>
<span class="t" style="left:491.0px;top:338.9px;font-size:14px;line-height:17px;color:#323130;letter-spacing:0.24px;">2022-06-28</span>
<svg style="position:absolute;left:601.5px;top:337.5px;" width="18" height="18" viewBox="0 0 18 18" fill="none"><rect x="1.600" y="2.600" width="14.800" height="13.800" rx="2.500" stroke="#424242" stroke-width="1.200"/><path d="M1.600 6.600h14.800" stroke="#424242" stroke-width="1.200"/><g fill="#424242"><circle cx="5.600" cy="9.800" r="1"/><circle cx="9" cy="9.800" r="1"/><circle cx="12.400" cy="9.800" r="1"/><circle cx="5.600" cy="13.100" r="1"/><circle cx="9" cy="13.100" r="1"/></g></svg>
<span class="t" style="left:643.4px;top:338.9px;font-size:14px;line-height:17px;color:#323130;letter-spacing:-0.29px;">16:30</span>
<svg style="position:absolute;left:716px;top:342.12px" width="15" height="8.76" viewBox="-1 -1 15 8.76" fill="none"><path d="M0 0 L6.5 6.76 L13 0" stroke="#a19f9d" stroke-width="1.1" stroke-linecap="round" stroke-linejoin="round"/></svg>
<div style="position:absolute;left:752px;top:295.5px;width:39px;height:18px;border:1px solid #c8c6c4;border-radius:10px;background:#fff;"></div>
<div style="position:absolute;left:756px;top:299.5px;width:12px;height:12px;border-radius:50%;background:#605e5c;"></div>
<span class="t" style="left:799.3px;top:297.7px;font-size:14px;line-height:17px;color:#323130;letter-spacing:0.09px;">Ganztägig</span>
<svg style="position:absolute;left:892px;top:296.5px;" width="18" height="18" viewBox="0 0 18 18" fill="none"><circle cx="9" cy="9" r="7.400" stroke="#0f6cbd" stroke-width="1.200"/><ellipse cx="9" cy="9" rx="3.300" ry="7.400" stroke="#0f6cbd" stroke-width="1.100"/><path d="M2 6.500h14 M2 11.500h14" stroke="#0f6cbd" stroke-width="1.100"/></svg>
<span class="t" style="left:919.8px;top:297.2px;font-size:14px;line-height:17px;color:#3b7cbb;letter-spacing:0.19px;">Zeitzonen</span>
<div style="position:absolute;left:752px;top:329px;width:189px;height:31px;border:1px solid #d2d0ce;border-radius:4px;background:#fff;box-shadow:0 1px 1px rgba(0,0,0,.06);"></div>
<svg style="position:absolute;left:764px;top:336px;" width="20" height="20" viewBox="0 0 20 20" fill="none"><path d="M3.600 11.500a6.300 6.300 0 0 1 9.800-6.600 M16.400 8.500a6.300 6.300 0 0 1-9.800 6.600" stroke="#424242" stroke-width="1.200" stroke-linecap="round"/><path d="M10.300 1.800 L13.700 4.900 L10.300 7.500 M9.700 18.200 L6.300 15.100 L9.700 12.500" stroke="#424242" stroke-width="1.200" stroke-linecap="round" stroke-linejoin="round"/></svg>
<span class="t" style="left:795.0px;top:337.7px;font-size:14px;line-height:17px;color:#323130;letter-spacing:0.34px;">Nicht wiederholen</span>
<svg style="position:absolute;left:920px;top:342.08px" width="14" height="8.24" viewBox="-1 -1 14 8.24" fill="none"><path d="M0 0 L6.0 6.24 L12 0" stroke="#8a8886" stroke-width="1.1" stroke-linecap="round" stroke-linejoin="round"/></svg>
<svg style="position:absolute;left:445px;top:380px;" width="20" height="20" viewBox="0 0 20 20" fill="none"><path d="M10 18.300c-3.500-3.300-6-6.300-6-9.500a6 6 0 0 1 12 0c0 3.200-2.500 6.200-6 9.500z" stroke="#424242" stroke-width="1.200" stroke-linejoin="round"/><circle cx="10" cy="8.500" r="1.600" fill="#424242"/></svg>
<span class="t" style="left:482.4px;top:383.0px;font-size:14px;line-height:17px;color:#605e5c;letter-spacing:0.17px;">Nach einem Raum oder Ort suchen</span>
<div style="position:absolute;left:946px;top:381.5px;width:39px;height:18px;border:1px solid #c8c6c4;border-radius:10px;background:#fff;"></div>
<div style="position:absolute;left:950px;top:385.5px;width:12px;height:12px;border-radius:50%;background:#605e5c;"></div>
<svg style="position:absolute;left:997px;top:381px;" width="19" height="19" viewBox="0 0 19 19" fill="none"><circle cx="14.800" cy="4.300" r="2.100" fill="#7b83eb"/><circle cx="9.800" cy="3.500" r="2.700" fill="#5059c9"/><rect x="11.500" y="7" width="6.800" height="8.500" rx="2" fill="#7b83eb"/><rect x="4.500" y="7" width="10.500" height="11" rx="2.500" fill="#5059c9"/><rect x="0.500" y="5" width="10" height="10" rx="1.200" fill="#4b53bc"/><path d="M3 7.500h5 M5.500 7.500v5.500" stroke="#fff" stroke-width="1.300"/></svg>
<span class="t" style="left:1025.9px;top:383.0px;font-size:14px;line-height:17px;color:#323130;letter-spacing:-0.03px;">Teams-Besprechung</span>
<div style="position:absolute;left:482px;top:412px;width:686px;height:1px;background:#c8c6c4;"></div>
<svg style="position:absolute;left:445px;top:432px;" width="20" height="20" viewBox="0 0 20 20" fill="none"><circle cx="10" cy="11" r="6.600" stroke="#424242" stroke-width="1.200"/><path d="M9.700 7.500v4h3" stroke="#424242" stroke-width="1.200" stroke-linecap="round" stroke-linejoin="round"/><path d="M2.300 6.300a3 3 0 0 1 4-3.500 M17.700 6.300a3 3 0 0 0-4-3.500 M5 16.500 L3.500 18.200 M15 16.500 L16.500 18.200" stroke="#424242" stroke-width="1.200" stroke-linecap="round"/></svg>
<div style="position:absolute;left:481px;top:426px;width:159px;height:31px;border:1px solid #d2d0ce;border-radius:4px;background:#fff;box-shadow:0 1px 1px rgba(0,0,0,.06);"></div>
<span class="t" style="left:491.4px;top:433.7px;font-size:14px;line-height:17px;color:#323130;letter-spacing:0.34px;">15 Minuten vorher</span>
<svg style="position:absolute;left:618px;top:438.68px" width="14" height="8.24" viewBox="-1 -1 14 8.24" fill="none"><path d="M0 0 L6.0 6.24 L12 0" stroke="#797775" stroke-width="1.1" stroke-linecap="round" stroke-linejoin="round"/></svg>
<svg style="position:absolute;left:445px;top:481px;" width="20" height="13" viewBox="0 0 20 13" fill="none"><path d="M.6 1.500h18 M.6 6.500h13 M.6 11.500h9" stroke="#424242" stroke-width="1.300" stroke-linecap="round"/></svg>
<div style="position:absolute;left:479px;top:470px;width:687px;height:130px;border:1px solid #c8c6c4;border-bottom-color:#bebbb8;border-radius:2px;background:#fff;"></div>
<div style="position:absolute;left:480px;top:553px;width:687px;height:48px;background:#f3f2f1;"></div>
<span class="t" style="left:490.2px;top:479.7px;font-size:14px;line-height:17px;color:#605e5c;letter-spacing:0.23px;">Eine Beschreibung hinzufügen oder Dokumente anfügen</span>
<svg style="position:absolute;left:494px;top:561px;" width="18" height="26" viewBox="0 0 18 26" fill="none"><path d="M5.400 10.500v9a3.800 3.800 0 0 0 7.600 0V8.300a2.600 2.600 0 0 0-5.200 0v10.500a1.300 1.300 0 0 0 2.600 0V10.500" stroke="#605e5c" stroke-width="1.150" stroke-linecap="round"/></svg>
<svg style="position:absolute;left:513px;top:572.77px" width="12.5" height="7.46" viewBox="-1 -1 12.5 7.46" fill="none"><path d="M0 0 L5.25 5.46 L10.5 0" stroke="#605e5c" stroke-width="1.1" stroke-linecap="round" stroke-linejoin="round"/></svg>
<svg style="position:absolute;left:547px;top:567px;" width="20" height="18" viewBox="0 0 20 18" fill="none"><rect x="1.500" y="2.500" width="17" height="13" stroke="#605e5c" stroke-width="1.100"/><path d="M2.500 14.500 L7.500 8.500 L11.500 12.500 L14 10.500 L17.500 14.500z" fill="#2b79c2"/><circle cx="14" cy="6.300" r="1.300" fill="#2b79c2"/></svg>
<svg style="position:absolute;left:584.2px;top:565.4px;" width="20" height="20" viewBox="0 0 20 20" fill="none"><circle cx="10" cy="10" r="8.600" fill="#f0b51c" stroke="#c9930a" stroke-width="1"/><circle cx="7" cy="7.800" r="1.100" fill="#5c4100"/><circle cx="13" cy="7.800" r="1.100" fill="#5c4100"/><path d="M5.500 11.500a4.700 4.700 0 0 0 9 0" stroke="#5c4100" stroke-width="1.100" stroke-linecap="round"/></svg>
<svg style="position:absolute;left:622px;top:565px;" width="20" height="22" viewBox="0 0 20 22" fill="none"><path d="M2 11 L5.500 2.500 L9 11 M3.200 8h4.600" stroke="#2b79c2" stroke-width="1.200" stroke-linejoin="round"/><rect x="8" y="11.500" width="7.500" height="5.500" rx="1" transform="rotate(-40 11.700 14.200)" stroke="#605e5c" stroke-width="1.100"/><path d="M6.500 19.500h11" stroke="#605e5c" stroke-width="1.100"/></svg>
<svg style="position:absolute;left:658px;top:565px;" width="22" height="22" viewBox="0 0 22 22" fill="none"><path d="M2 18.500 L3.800 13.500 L13.500 3.800a1.900 1.900 0 0 1 2.700 2.700L6.500 16.200z M3.800 13.500 L6.500 16.200" stroke="#424242" stroke-width="1.200" stroke-linejoin="round"/><path d="M14.500 9h5.500 M12.500 11.500h7 M11 14h6" stroke="#4a90d9" stroke-width="1"/></svg>
<svg style="position:absolute;left:696px;top:566px;" width="20" height="20" viewBox="0 0 20 20" fill="none"><path d="M11 2.500H3.500v15h5 M11 2.500 L15.500 7 M11 2.500V7h4.500v3" stroke="#605e5c" stroke-width="1.100" stroke-linejoin="round"/><circle cx="13.500" cy="14.500" r="4.500" stroke="#605e5c" stroke-width="1" stroke-dasharray="2 1.200"/><path d="M13.500 12v3h2" stroke="#605e5c" stroke-width="1"/></svg>
<div style="position:absolute;left:1199px;top:121px;width:372px;height:831px;background:#fff;"></div>
<span class="t" style="left:1374.7px;top:136.2px;font-size:18px;line-height:22px;color:#605e5c;letter-spacing:-1.24px;">2022</span>
<svg style="position:absolute;left:1416.5px;top:144.34px" width="13" height="7.72" viewBox="-1 -1 13 7.72" fill="none"><path d="M0 0 L5.5 5.72 L11 0" stroke="#605e5c" stroke-width="1.1" stroke-linecap="round" stroke-linejoin="round"/></svg>
<div style="position:absolute;left:1199px;top:195px;width:352px;height:1px;background:#edebe9;"></div>
<div style="position:absolute;left:1199px;top:225px;width:352px;height:0px;border-top:1px dashed #eae8e6;"></div>
<div style="position:absolute;left:1199px;top:256px;width:352px;height:1px;background:#edebe9;"></div>
<div style="position:absolute;left:1199px;top:287px;width:352px;height:0px;border-top:1px dashed #eae8e6;"></div>
<span class="t" style="right:759.5px;top:260.0px;font-size:12px;line-height:16px;color:#605e5c;letter-spacing:-.3px;">14</span>
<div style="position:absolute;left:1199px;top:319px;width:352px;height:1px;background:#edebe9;"></div>
<div style="position:absolute;left:1199px;top:350px;width:352px;height:0px;border-top:1px dashed #eae8e6;"></div>
<span class="t" style="right:759.5px;top:323.0px;font-size:12px;line-height:16px;color:#605e5c;letter-spacing:-.3px;">15</span>
<div style="position:absolute;left:1199px;top:381px;width:352px;height:1px;background:#edebe9;"></div>
<div style="position:absolute;left:1199px;top:412px;width:352px;height:0px;border-top:1px dashed #eae8e6;"></div>
<span class="t" style="right:759.5px;top:385.0px;font-size:12px;line-height:16px;color:#605e5c;letter-spacing:-.3px;">16</span>
<div style="position:absolute;left:1199px;top:444px;width:352px;height:1px;background:#edebe9;"></div>
<div style="position:absolute;left:1199px;top:475px;width:352px;height:0px;border-top:1px dashed #eae8e6;"></div>
<span class="t" style="right:759.5px;top:448.0px;font-size:12px;line-height:16px;color:#605e5c;letter-spacing:-.3px;">17</span>
<div style="position:absolute;left:1199px;top:506px;width:352px;height:1px;background:#edebe9;"></div>
<div style="position:absolute;left:1199px;top:538px;width:352px;height:0px;border-top:1px dashed #eae8e6;"></div>
<span class="t" style="right:759.5px;top:510.0px;font-size:12px;line-height:16px;color:#605e5c;letter-spacing:-.3px;">18</span>
<div style="position:absolute;left:1199px;top:569px;width:352px;height:1px;background:#edebe9;"></div>
<div style="position:absolute;left:1199px;top:600px;width:352px;height:0px;border-top:1px dashed #eae8e6;"></div>
<span class="t" style="right:759.5px;top:573.0px;font-size:12px;line-height:16px;color:#605e5c;letter-spacing:-.3px;">19</span>
<div style="position:absolute;left:1199px;top:631px;width:352px;height:1px;background:#edebe9;"></div>
<div style="position:absolute;left:1199px;top:663px;width:352px;height:0px;border-top:1px dashed #eae8e6;"></div>
<span class="t" style="right:759.5px;top:635.0px;font-size:12px;line-height:16px;color:#605e5c;letter-spacing:-.3px;">20</span>
<div style="position:absolute;left:1199px;top:694px;width:352px;height:1px;background:#edebe9;"></div>
<div style="position:absolute;left:1199px;top:725px;width:352px;height:0px;border-top:1px dashed #eae8e6;"></div>
<span class="t" style="right:759.5px;top:698.0px;font-size:12px;line-height:16px;color:#605e5c;letter-spacing:-.3px;">21</span>
<div style="position:absolute;left:1199px;top:756px;width:352px;height:1px;background:#edebe9;"></div>
<div style="position:absolute;left:1199px;top:788px;width:352px;height:0px;border-top:1px dashed #eae8e6;"></div>
<span class="t" style="right:759.5px;top:760.0px;font-size:12px;line-height:16px;color:#605e5c;letter-spacing:-.3px;">22</span>
<div style="position:absolute;left:1199px;top:819px;width:352px;height:1px;background:#edebe9;"></div>
<div style="position:absolute;left:1199px;top:850px;width:352px;height:0px;border-top:1px dashed #eae8e6;"></div>
<span class="t" style="right:759.5px;top:823.0px;font-size:12px;line-height:16px;color:#605e5c;letter-spacing:-.3px;">23</span>
<div style="position:absolute;left:1249px;top:178px;width:1px;height:701px;background:#e6e4e2;"></div>
<div style="position:absolute;left:1551px;top:178px;width:1px;height:701px;background:#e6e4e2;"></div>
<div style="position:absolute;left:1249px;top:381px;width:302px;height:31.6px;background:#4cc074;border-radius:2px;box-shadow:0 8px 14px rgba(0,0,0,.15),0 1px 3px rgba(0,0,0,.10);"></div>
<span class="t" style="left:1259.6px;top:388.5px;font-size:14px;line-height:17px;color:#06280f;-webkit-text-stroke:0.42px #06280f;letter-spacing:-0.25px;-webkit-text-stroke:.5px #06280f;">16:00 – 16:30</span>
<div style="position:absolute;left:1518.8px;top:377.8px;width:7.6px;height:7.6px;border:1.500px solid #4cc074;border-radius:50%;background:#fff;"></div>
<div style="position:absolute;left:1271.2px;top:407.8px;width:7.6px;height:7.6px;border:1.500px solid #4cc074;border-radius:50%;background:#fff;"></div>
<div style="position:absolute;left:1184px;top:101px;width:188px;height:114px;background:#fff;border-radius:2px;box-shadow:0 3px 8px rgba(0,0,0,.2),0 0 2px rgba(0,0,0,.15);"></div>
<div style="position:absolute;left:1184px;top:177px;width:188px;height:38px;background:#f3f2f1;border-radius:0 0 2px 2px;"></div>
<svg style="position:absolute;left:1192px;top:111px;" width="18" height="18" viewBox="0 0 18 18" fill="none"><rect x="5" y="1" width="12" height="16" rx="1.200" fill="#ca64ea"/><rect x="11.500" y="1" width="5.500" height="5.300" fill="#e3a9f5"/><rect x="11.500" y="6.300" width="5.500" height="5.300" fill="#ae4bd5"/><rect x="11.500" y="11.600" width="5.500" height="5.400" fill="#9332bf"/><rect x="0.500" y="4" width="10" height="10" rx="1" fill="#7719aa"/><path d="M3.500 11.300V6.700 L7.500 11.300 V6.700" stroke="#fff" stroke-width="1.200" stroke-linejoin="round"/></svg>
<span class="t" style="left:1218.7px;top:111.5px;font-size:14px;line-height:17px;color:#323130;letter-spacing:0.22px;">An OneNote senden</span>
<svg style="position:absolute;left:1192px;top:148px;" width="18" height="20" viewBox="0 0 18 20" fill="none"><path d="M9.800 14H4.300a1 1 0 0 1-1-1V2.500a1 1 0 0 1 1-1h5.200l4 4v3.500" stroke="#3f6ea3" stroke-width="1.200" stroke-linejoin="round"/><path d="M9.500 1.500v4h4" stroke="#3f6ea3" stroke-width="1.100" stroke-linejoin="round"/><path d="M14 8.500 L11.300 12.300h2.900l-2.400 4.400" stroke="#1d3f6e" stroke-width="1.500" stroke-linejoin="round" stroke-linecap="round"/></svg>
<span class="t" style="left:1218.7px;top:149.2px;font-size:14px;line-height:17px;color:#323130;letter-spacing:0.24px;">Meine Vorlagen</span>
<svg style="position:absolute;left:1192px;top:186px;" width="18" height="19" viewBox="0 0 18 19" fill="none"><path d="M8.500 3.500h-6a1 1 0 0 0-1 1v12a1 1 0 0 0 1 1h12a1 1 0 0 0 1-1v-6 M8.500 3.500v14 M1.500 10.500h14" stroke="#3a72ad" stroke-width="1.200"/><path d="M14 1.500v6 M11 4.500h6" stroke="#3a72ad" stroke-width="1.200"/></svg>
<span class="t" style="left:1218.7px;top:187.7px;font-size:14px;line-height:17px;color:#323130;letter-spacing:0.26px;">Add-Ins erhalten</span>
</div>
<svg style="position:absolute;left:0;top:0;" width="2000" height="976" viewBox="0 0 2000 976" fill="none">
<defs><filter id="ash" x="-20%" y="-20%" width="140%" height="140%"><feGaussianBlur in="SourceAlpha" stdDeviation="2.400"/><feOffset dx="2.500" dy="3"/><feComponentTransfer><feFuncA type="linear" slope=".38"/></feComponentTransfer><feMerge><feMergeNode/><feMergeNode in="SourceGraphic"/></feMerge></filter></defs>
<g filter="url(#ash)"><path d="M1055.500 332.500 L1155 233.500" stroke="#f0403c" stroke-width="10" stroke-linecap="round"/><path d="M1176 213 L1143.500 223.500 L1165.500 245z" fill="#f0403c" stroke="#f0403c" stroke-width="1" stroke-linejoin="round"/></g></svg>
</body></html>
